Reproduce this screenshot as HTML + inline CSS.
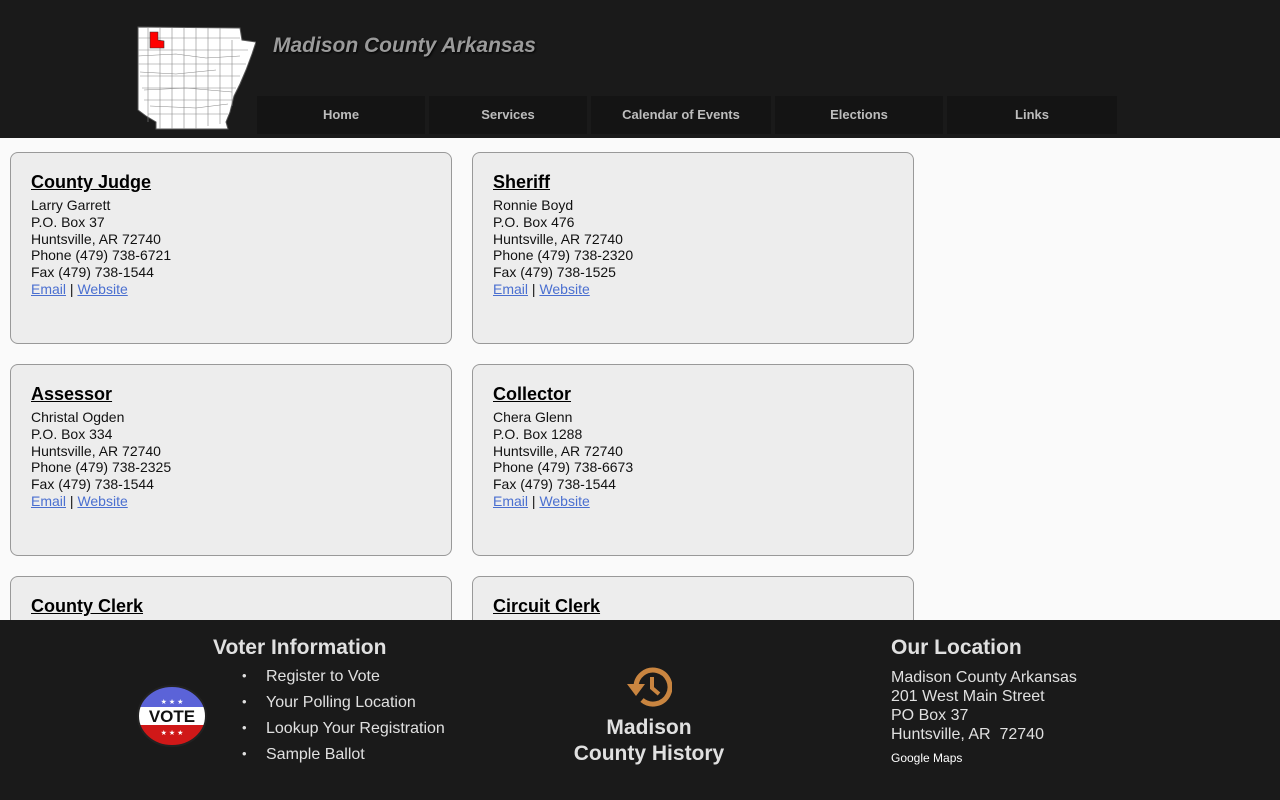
<!DOCTYPE html>
<html><head><meta charset="utf-8"><style>
*{margin:0;padding:0;box-sizing:border-box}
body{width:1280px;height:800px;overflow:hidden;background:#fafafa;font-family:"Liberation Sans",Arial,sans-serif;position:relative}
#hdr{position:absolute;left:0;top:0;width:1280px;height:138px;background:#1a1a1a}
#title{position:absolute;left:273px;top:34px;font-size:21px;font-weight:bold;font-style:italic;color:#9a9a9a;text-shadow:1px 1px 2px #000}
.nav{position:absolute;top:96px;height:38px;background:#141414;color:#bdbdbd;font-size:13px;font-weight:bold;font-family:"Liberation Sans",sans-serif;text-align:center;line-height:37px}
.card{position:absolute;width:442px;height:192px;background:#ededed;border:1px solid #999;border-radius:8px;padding:18px 20px;font-family:"Liberation Sans",Arial,sans-serif;font-size:14px;line-height:16.8px;color:#111}
.card h2{font-size:18px;text-decoration:underline;line-height:22px;margin-bottom:4px;color:#000}
.card a{color:#4a6fd0;text-decoration:underline}
#ftr{position:absolute;left:0;top:620px;width:1280px;height:180px;background:#1a1a1a;color:#e0e0e0}
#ftr h3{font-size:21px;font-weight:bold}
ul{list-style:none}
li{font-size:16px;height:26px;position:relative}
li:before{content:"•";position:absolute;left:-24px;font-size:13px}
</style></head><body>
<div id="hdr">
<svg style="position:absolute;left:136px;top:26px" width="120" height="104" viewBox="0 0 120 104">
<path d="M2 1 L104 2 L106 14 L120 16 L116 28 L110 44 L104 58 L98 70 L94 86 L90 96 L92 103 L20 103 L20 96 L10 90 L2 84 Z" fill="#fff" stroke="#555" stroke-width="1"/>
<g stroke="#888" stroke-width="0.6" fill="none">
<path d="M2 12H104M2 24H112M2 38H110M4 50H104M6 62H100M8 74H96M12 88H92M12 2V96M24 2V103M36 2V103M48 2V103M60 2V103M72 2V100M84 2V98M96 14V80"/>
<path d="M2 30L40 28L70 32L104 30M4 46L40 48L80 44M8 64L50 62L96 66M14 80L60 82L92 78"/>
</g>
<path d="M14 6H22L22 14L28 15L28 22H14Z" fill="#f00" stroke="#333" stroke-width="0.6"/>
</svg>
<div id="title">Madison County Arkansas</div>
<div class="nav" style="left:257px;width:168px">Home</div>
<div class="nav" style="left:429px;width:158px">Services</div>
<div class="nav" style="left:591px;width:180px">Calendar of Events</div>
<div class="nav" style="left:775px;width:168px">Elections</div>
<div class="nav" style="left:947px;width:170px">Links</div>
</div>

<div class="card" style="left:10px;top:152px"><h2>County Judge</h2>Larry Garrett<br>P.O. Box 37<br>Huntsville, AR 72740<br>Phone (479) 738-6721<br>Fax (479) 738-1544<br><a>Email</a> | <a>Website</a></div>
<div class="card" style="left:472px;top:152px"><h2>Sheriff</h2>Ronnie Boyd<br>P.O. Box 476<br>Huntsville, AR 72740<br>Phone (479) 738-2320<br>Fax (479) 738-1525<br><a>Email</a> | <a>Website</a></div>
<div class="card" style="left:10px;top:364px"><h2>Assessor</h2>Christal Ogden<br>P.O. Box 334<br>Huntsville, AR 72740<br>Phone (479) 738-2325<br>Fax (479) 738-1544<br><a>Email</a> | <a>Website</a></div>
<div class="card" style="left:472px;top:364px"><h2>Collector</h2>Chera Glenn<br>P.O. Box 1288<br>Huntsville, AR 72740<br>Phone (479) 738-6673<br>Fax (479) 738-1544<br><a>Email</a> | <a>Website</a></div>
<div class="card" style="left:10px;top:576px"><h2>County Clerk</h2></div>
<div class="card" style="left:472px;top:576px"><h2>Circuit Clerk</h2></div>

<div id="ftr">
<h3 style="position:absolute;left:213px;top:16px">Voter Information</h3>
<svg style="position:absolute;left:136px;top:65px" width="72" height="62" viewBox="0 0 72 62">
<defs><clipPath id="c"><ellipse cx="36" cy="31" rx="34" ry="30"/></clipPath></defs>
<g clip-path="url(#c)"><rect width="72" height="31" fill="#5b63d8"/><rect y="31" width="72" height="31" fill="#d01818"/><rect y="22" width="72" height="18" fill="#fff"/></g>
<ellipse cx="36" cy="31" rx="34" ry="30" fill="none" stroke="#222" stroke-width="2"/>
<text x="36" y="37" text-anchor="middle" font-family="Liberation Sans" font-weight="bold" font-size="17" fill="#111">VOTE</text>
<text x="36" y="19" text-anchor="middle" font-size="7" fill="#fff">★ ★ ★</text>
<text x="36" y="50" text-anchor="middle" font-size="7" fill="#fff">★ ★ ★</text>
</svg>
<ul style="position:absolute;left:266px;top:48px">
<li>Register to Vote</li><li>Your Polling Location</li><li>Lookup Your Registration</li><li>Sample Ballot</li></ul>
<svg style="position:absolute;left:626px;top:46px" width="46" height="42" viewBox="0 0 46 42">
<path d="M10 21 A17 17 0 1 1 16 34" fill="none" stroke="#c98540" stroke-width="5"/>
<path d="M1 18 L19 18 L10 30 Z" fill="#c98540"/>
<path d="M26 11 V22 L33 28" fill="none" stroke="#c98540" stroke-width="4"/>
</svg>
<div style="position:absolute;left:550px;top:95px;width:198px;text-align:center;font-size:21px;font-weight:bold;line-height:26px">Madison<br>County History</div>
<h3 style="position:absolute;left:891px;top:16px">Our Location</h3>
<div style="position:absolute;left:891px;top:48px;font-size:16px;line-height:19px">Madison County Arkansas<br>201 West Main Street<br>PO Box 37<br>Huntsville, AR&nbsp; 72740</div>
<div style="position:absolute;left:891px;top:131px;font-size:12px;color:#fff">Google Maps</div>
</div>
</body></html>
